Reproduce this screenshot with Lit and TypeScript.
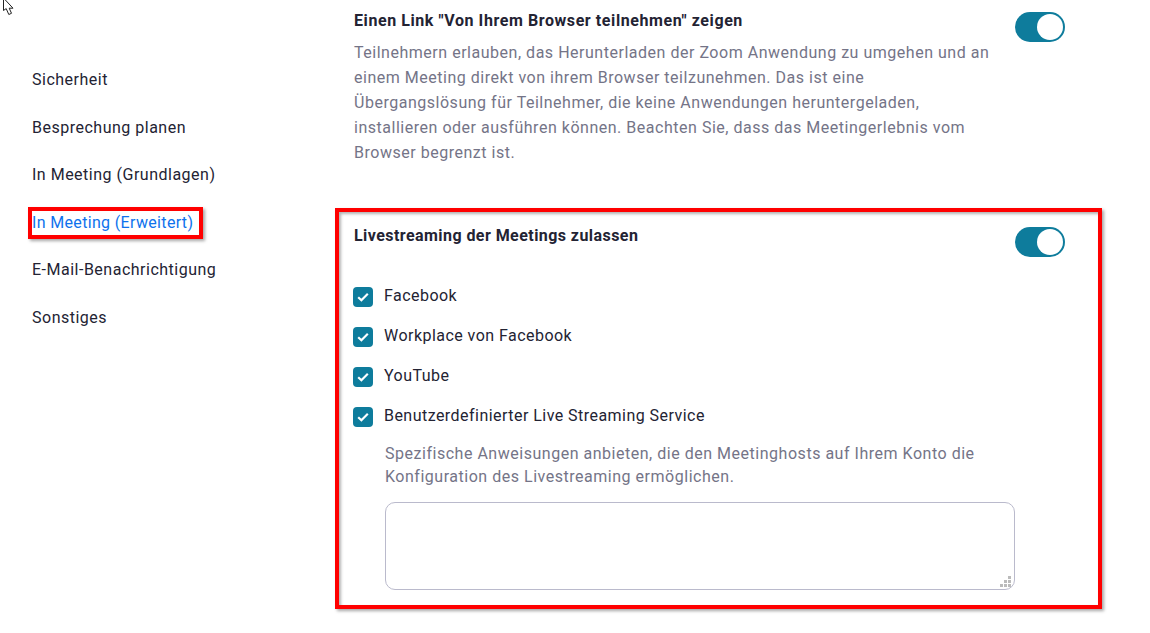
import { LitElement, css, html } from "lit";
import { customElement } from "lit/decorators.js";

const NAV = [
  "Sicherheit",
  "Besprechung planen",
  "In Meeting (Grundlagen)",
  "In Meeting (Erweitert)",
  "E-Mail-Benachrichtigung",
  "Sonstiges",
];

const SERVICES = [
  "Facebook",
  "Workplace von Facebook",
  "YouTube",
  "Benutzerdefinierter Live Streaming Service",
];

@customElement("app-root")
export class AppRoot extends LitElement {
  render() {
    return html`
      <svg class="cursor" width="16" height="16" viewBox="0 0 16 16">
        <path d="M3.5 -2V10.5L6.2 8.6L8.8 14.5L11.5 13.3L9.2 8.2H13Z" fill="#fff" stroke="#222" stroke-width="1" />
      </svg>
      <nav class="sidebar">
        ${NAV.map(
          (label) => html`<a class=${label.includes("Erweitert") ? "item active" : "item"}>${label}</a>`
        )}
      </nav>
      <main class="content">
        <section class="setting plain">
          <div class="body">
            <h3 class="wide">Einen Link "Von Ihrem Browser teilnehmen" zeigen</h3>
            <p class="desc">
              Teilnehmern erlauben, das Herunterladen der Zoom Anwendung zu umgehen und an<br />
              einem Meeting direkt von ihrem Browser teilzunehmen. Das ist eine<br />
              Übergangslösung für Teilnehmer, die keine Anwendungen heruntergeladen,<br />
              installieren oder ausführen können. Beachten Sie, dass das Meetingerlebnis vom<br />
              Browser begrenzt ist.
            </p>
          </div>
          <span class="toggle"><span class="knob"></span></span>
        </section>
        <section class="setting marked">
          <div class="body">
            <h3>Livestreaming der Meetings zulassen</h3>
            <div class="checks">
              ${SERVICES.map(
                (label) => html`
                  <label class="check">
                    <span class="box">
                      <svg width="12" height="10" viewBox="0 0 12 10">
                        <path d="M1.2 5.2L4.4 8.2L10.8 1.8" fill="none" stroke="#fff" stroke-width="2.2" />
                      </svg>
                    </span>
                    ${label}
                  </label>
                `
              )}
            </div>
            <div class="custom">
              <p class="hint">
                Spezifische Anweisungen anbieten, die den Meetinghosts auf Ihrem Konto die<br />
                Konfiguration des Livestreaming ermöglichen.
              </p>
              <div class="area">
                <svg class="grip" width="11" height="11" viewBox="0 0 11 11" fill="#bbb">
                  <rect x="8" y="0" width="3" height="3" />
                  <rect x="4" y="4" width="3" height="3" />
                  <rect x="8" y="4" width="3" height="3" />
                  <rect x="0" y="8" width="3" height="3" />
                  <rect x="4" y="8" width="3" height="3" />
                  <rect x="8" y="8" width="3" height="3" />
                </svg>
              </div>
            </div>
          </div>
          <span class="toggle"><span class="knob"></span></span>
        </section>
      </main>
    `;
  }

  static styles = css`
    :host {
      display: flex;
      position: relative;
      width: 1150px;
      height: 633px;
      overflow: hidden;
      background: #fff;
      color: #232333;
      font-family: Roboto, "Noto Sans", sans-serif;
      font-size: 16px;
    }
    .cursor {
      position: absolute;
      left: 0;
      top: 0;
    }
    .sidebar {
      box-sizing: border-box;
      width: 335px;
      flex: none;
      padding: 68px 0 0 32px;
      display: flex;
      flex-direction: column;
      align-items: flex-start;
      gap: 23.6px;
    }
    .item {
      line-height: 24px;
      letter-spacing: 0.5px;
    }
    .item.active {
      color: #0e72ed;
      border: 4px solid #f00;
      margin: -4px;
      padding-right: 6px;
      letter-spacing: 0.34px;
      box-shadow: 2px 2px 3px rgba(0, 0, 0, 0.35);
    }
    .content {
      width: 767px;
      flex: none;
      padding-top: 10px;
    }
    .setting {
      display: flex;
      justify-content: space-between;
      align-items: flex-start;
      box-sizing: border-box;
    }
    .plain {
      padding: 0 37px 0 18px;
      margin-bottom: 43px;
    }
    .marked {
      border: 4px solid #f00;
      padding: 13px 33px 15px 14px;
      box-shadow: 2px 2px 3px rgba(0, 0, 0, 0.35), inset 2px 2px 3px rgba(0, 0, 0, 0.3);
    }
    h3 {
      margin: 1px 0 -1px 1px;
      font-size: 16px;
      font-weight: 700;
      line-height: 20px;
      letter-spacing: 0.44px;
    }
    h3.wide {
      letter-spacing: 0.58px;
    }
    .desc {
      margin: 10px 0 0 1px;
      color: #747487;
      line-height: 25px;
      letter-spacing: 0.52px;
    }
    .toggle {
      flex: none;
      box-sizing: border-box;
      display: flex;
      justify-content: flex-end;
      align-items: center;
      width: 50px;
      height: 30px;
      margin-top: 2px;
      padding: 2px;
      border-radius: 15px;
      background: #0e7c9c;
    }
    .knob {
      width: 26px;
      height: 26px;
      border-radius: 50%;
      background: #fff;
    }
    .checks {
      display: flex;
      flex-direction: column;
      gap: 16px;
      margin-top: 38px;
    }
    .check {
      display: flex;
      align-items: center;
      gap: 11px;
      height: 24px;
      letter-spacing: 0.46px;
    }
    .box {
      display: flex;
      align-items: center;
      justify-content: center;
      width: 20px;
      height: 20px;
      margin-top: 3px;
      border-radius: 4px;
      background: #0e7c9c;
    }
    .custom {
      margin: 16px 0 0 32px;
    }
    .hint {
      margin: 0;
      color: #747487;
      line-height: 22.5px;
      letter-spacing: 0.52px;
    }
    .area {
      position: relative;
      box-sizing: border-box;
      width: 630px;
      height: 88px;
      margin-top: 14px;
      border: 1px solid #babacc;
      border-radius: 10px;
    }
    .grip {
      position: absolute;
      right: 3px;
      bottom: 2px;
    }
  `;
}

declare global {
  interface HTMLElementTagNameMap {
    "app-root": AppRoot;
  }
}
